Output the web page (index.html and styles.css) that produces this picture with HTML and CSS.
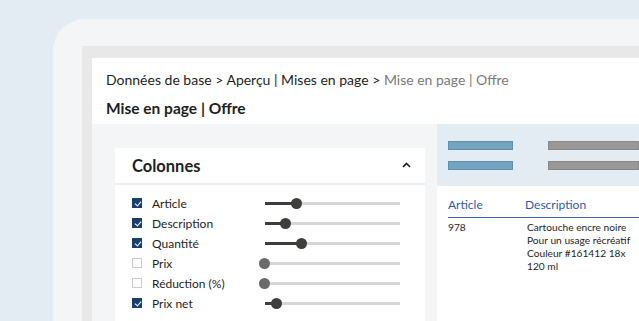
FILE: index.html
```html
<!DOCTYPE html>
<html lang="fr">
<head>
  <meta charset="UTF-8" />
  <meta name="viewport" content="width=device-width, initial-scale=1.0"/>
  <title>Mise en page | Offre</title>
  <link rel="stylesheet" href="styles.css">
</head>
<body>

<div class="device">
  <div class="frame">
    <div class="screen">
      <div class="page-head">
        <div class="crumbs">Données de base &gt; Aperçu | Mises en page &gt; <span class="current">Mise en page | Offre</span></div>
        <h1>Mise en page | Offre</h1>
      </div>

      <div class="workspace">
        <div class="settings">
          <div class="card">
            <div class="card-head">
              <span>Colonnes</span>
              <svg class="chevron" width="9" height="6" viewBox="0 0 9 6"><path d="M1 5 L4.5 1.5 L8 5" fill="none" stroke="#222" stroke-width="1.6"/></svg>
            </div>
            <ul class="columns">
              <li><span class="check on"></span><span class="label">Article</span><span class="slider"><span class="fill" style="width:32px"></span></span></li>
              <li><span class="check on"></span><span class="label">Description</span><span class="slider"><span class="fill" style="width:21px"></span></span></li>
              <li><span class="check on"></span><span class="label">Quantité</span><span class="slider"><span class="fill" style="width:37px"></span></span></li>
              <li><span class="check"></span><span class="label">Prix</span><span class="slider off"><span class="fill" style="width:0px"></span></span></li>
              <li><span class="check"></span><span class="label">Réduction (%)</span><span class="slider off"><span class="fill" style="width:0px"></span></span></li>
              <li><span class="check on"></span><span class="label">Prix net</span><span class="slider"><span class="fill" style="width:12px"></span></span></li>
            </ul>
          </div>
        </div>

        <div class="preview">
          <div class="preview-top">
            <div class="bars"><span class="bar blue"></span><span class="bar grey"></span></div>
            <div class="bars"><span class="bar blue"></span><span class="bar grey"></span></div>
          </div>
          <div class="table">
            <div class="thead"><span class="col-a">Article</span><span class="col-b">Description</span></div>
            <div class="trow">
              <span class="col-a">978</span>
              <span class="col-b">Cartouche encre noire<br>Pour un usage récréatif<br>Couleur #161412 18x<br>120 ml</span>
            </div>
          </div>
        </div>
      </div>
    </div>
  </div>
</div>

</body>
</html>
```

FILE: styles.css
```css
html, body {
  width: 639px;
  height: 321px;
  overflow: hidden;
}

body {
  margin: 0;
  padding: 19px 0 0 53px;
  background: #e3ebf3;
  font-family: "Lato", "Open Sans", sans-serif;
  color: #1e1e1e;
  box-sizing: border-box;
}

.device {
  width: 586px;
  height: 302px;
  background: #f3f5f7;
  border-radius: 32px 0 0 0;
  padding: 27px 0 0 29px;
  box-sizing: border-box;
  overflow: hidden;
}

.frame {
  background: #e8e8e8;
  padding: 12px 0 0 10px;
  height: 100%;
  box-sizing: border-box;
}

.screen {
  background: #fff;
  height: 100%;
  overflow: hidden;
}

/* Header */
.page-head {
  height: 66px;
  padding: 13px 0 0 14px;
  box-sizing: border-box;
}

.crumbs {
  font-size: 14px;
  line-height: 18px;
  color: #1e1e1e;
}

.crumbs .current {
  color: #7a7a7a;
}

.page-head h1 {
  margin: 9px 0 0;
  font-size: 15.5px;
  font-weight: 700;
  line-height: 20px;
}

/* Body */
.workspace {
  display: flex;
  height: 200px;
}

.settings {
  width: 345px;
  flex-shrink: 0;
  background: #f3f5f7;
  padding: 24px 12px 0 23px;
  box-sizing: border-box;
}

.card {
  background: #fff;
  height: 100%;
}

.card-head {
  height: 35px;
  display: flex;
  align-items: center;
  justify-content: space-between;
  padding: 0 14px 0 17px;
  border-bottom: 2px solid #eceef0;
  font-size: 16.5px;
  font-weight: 700;
}

.chevron {
  margin-top: -2px;
}

.columns {
  list-style: none;
  margin: 0;
  padding: 8px 0 0 17px;
}

.columns li {
  height: 20px;
  display: flex;
  align-items: center;
  font-size: 12px;
}

.check {
  width: 10px;
  height: 10px;
  border: 1px solid #cbcbcb;
  box-sizing: border-box;
  background: #fff;
  margin-right: 10px;
  position: relative;
}

.check.on {
  background: #17406f;
  border-color: #17406f;
}

.check.on::after {
  content: "";
  position: absolute;
  left: 2.5px;
  top: 1px;
  width: 3px;
  height: 5px;
  border: solid #fff;
  border-width: 0 1.5px 1.5px 0;
  transform: rotate(40deg);
}

.label {
  width: 113px;
}

.slider {
  position: relative;
  width: 135px;
  height: 3px;
  background: #d6d6d6;
}

.slider .fill {
  position: absolute;
  left: 0;
  top: 0;
  height: 3px;
  background: #3e3e3c;
}

.slider .fill::after {
  content: "";
  position: absolute;
  right: -5px;
  top: -4px;
  width: 11px;
  height: 11px;
  border-radius: 50%;
  background: #3e3e3c;
}

.slider.off .fill::after {
  background: #6b6b6b;
}

/* Preview */
.preview {
  flex: 1;
  min-width: 0;
  background: #fff;
}

.preview-top {
  background: #e3ebf3;
  height: 62px;
  padding-top: 17px;
  box-sizing: border-box;
}

.bars {
  display: flex;
  height: 9px;
  margin-bottom: 11px;
}

.bar {
  height: 9px;
  box-sizing: border-box;
}

.bar.blue {
  width: 65px;
  margin: 0 35px 0 11px;
  background: #74a4bf;
  border: 1px solid #5e8fac;
}

.bar.grey {
  flex: 1;
  background: #9a9896;
  border: 1px solid #8a8886;
}

.table {
  padding: 11px 0 0 11px;
}

.thead {
  display: flex;
  color: #2d5ab0;
  font-size: 12px;
  line-height: 16px;
  padding-bottom: 4px;
  border-bottom: 1.5px solid #3d66ae;
}

.trow {
  display: flex;
  font-size: 10.2px;
  line-height: 13px;
  padding-top: 3px;
  white-space: nowrap;
}

.col-a {
  width: 77px;
  flex-shrink: 0;
}

.trow .col-a {
  width: 79px;
}
```
